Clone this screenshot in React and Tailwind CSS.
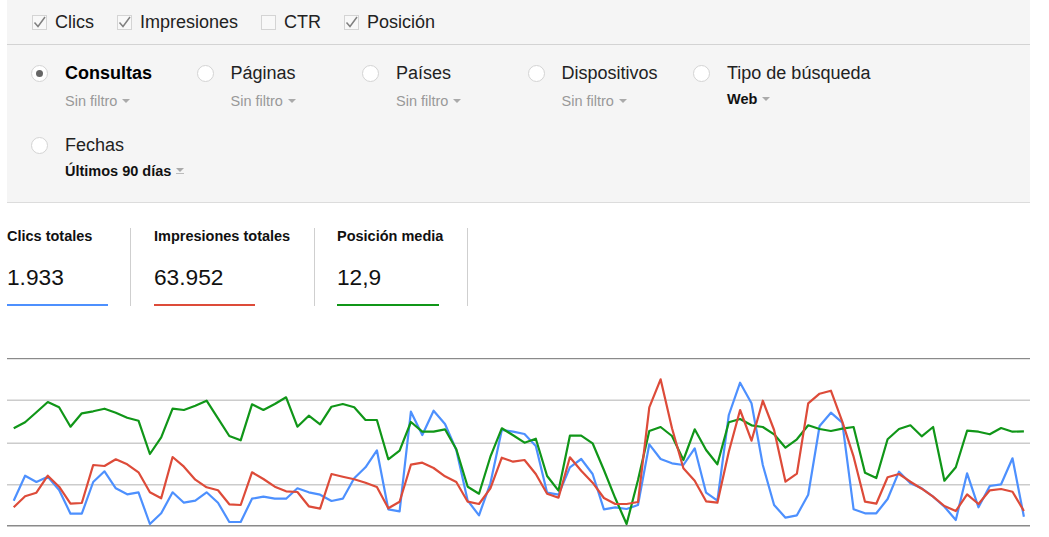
import React from "react";

const FONT = "font-['Liberation_Sans',Arial,sans-serif]";

const green = [235,217,187,156,172,230,190,184,176,188,203,212,312,262,176,180,167,152,205,258,271,163,180,162,142,230,197,223,170,162,172,210,210,328,302,216,245,245,238,298,410,431,320,235,256,278,266,378,422,257,257,280,360,445,522,390,243,231,258,330,238,300,343,217,207,226,231,253,293,268,226,237,243,236,231,368,384,268,237,226,259,231,392,352,242,245,253,234,245,244];
const red = [472,439,428,377,410,461,459,345,348,328,343,367,427,445,321,350,389,412,421,463,465,367,387,410,424,426,469,476,372,380,388,398,411,475,455,344,338,354,379,396,455,462,415,323,335,330,372,431,443,322,362,398,444,462,462,456,172,88,235,355,392,454,458,305,180,272,152,240,395,371,160,131,122,215,320,455,461,382,372,395,416,440,468,483,433,462,421,417,425,483];
const blue = [452,377,396,380,420,491,491,396,364,415,433,427,522,490,427,458,452,427,458,516,516,446,440,446,446,415,427,434,453,446,385,352,301,478,484,185,255,182,222,300,452,496,400,240,245,252,288,428,434,352,327,372,478,472,477,465,283,327,340,345,295,428,452,195,98,160,345,465,503,496,434,228,188,218,478,490,490,447,365,400,415,440,470,510,370,472,408,403,325,500];

// values were read off a 3x crop, so scale back to chart coordinates
const toPoints = (vals) =>
  vals.map((v, i) => `${(6.7 + i * 11.35).toFixed(1)},${(v / 3).toFixed(1)}`).join(" ");

function Check({ label, checked }) {
  return (
    <label className="flex items-center gap-2">
      <span className="w-[15px] h-[15px] border border-[#d4d4d4] bg-[#f8f8f8] flex items-center justify-center shrink-0">
        {checked && (
          <svg className="overflow-visible" width="13" height="13" viewBox="0 0 13 13" fill="none">
            <path d="M1.5 6.5L5 10.5L12 1" stroke="#808080" strokeWidth="1.5" />
          </svg>
        )}
      </span>
      <span>{label}</span>
    </label>
  );
}

function Filter({ label, sub, active, strong, flag }) {
  return (
    <div className="w-[165.5px] flex h-[72px]">
      <div className="w-[34px] pt-[1px] shrink-0">
        <span className="w-[17px] h-[17px] rounded-full border border-[#d4d4d4] bg-white flex items-center justify-center">
          {active && <span className="w-[7px] h-[7px] rounded-full bg-[#666]" />}
        </span>
      </div>
      <div>
        <div className={`text-[18px] leading-[18px] whitespace-nowrap ${active ? "font-bold text-black" : "text-[#222]"}`}>
          {label}
        </div>
        <div className={`flex items-center gap-[5px] whitespace-nowrap leading-[16px] text-[14.5px] ${strong ? "mt-[9px] font-bold text-[#111]" : "mt-[11px] text-[#999]"}`}>
          {sub}
          <span className="flex flex-col items-center">
            <span className="w-0 h-0 border-x-[4px] border-x-transparent border-t-[4px] border-t-[#aaa]" />
            {flag && <span className="w-[8px] h-[1px] bg-[#bbb] mt-[1px]" />}
          </span>
        </div>
      </div>
    </div>
  );
}

function Stat({ title, value, color, className }) {
  return (
    <div className={`h-[78px] flex flex-col ${className}`}>
      <div className="text-[14.5px] font-bold text-[#111] leading-[16px] whitespace-nowrap">{title}</div>
      <div className="text-[22.7px] leading-[26px] text-[#111] mt-[20px]">{value}</div>
      <div className={`mt-auto h-[2px] ${color}`} />
    </div>
  );
}

export default function App() {
  return (
    <div className={`w-[1049px] h-[537px] bg-white overflow-hidden ${FONT}`}>
      {/* Filter panel */}
      <div className="ml-[7px] w-[1023px] h-[203px] bg-[#f5f5f5] border-b border-[#dcdcdc]">
        <div className="h-[45px] border-b border-[#d3d3d3] pl-[25px] flex items-center gap-[23px] text-[18px] text-[#222]">
          <Check label="Clics" checked />
          <Check label="Impresiones" checked />
          <Check label="CTR" />
          <Check label="Posición" checked />
        </div>
        <div className="pl-[24px] pt-[19px] w-[860px] flex flex-wrap">
          <Filter label="Consultas" sub="Sin filtro" active />
          <Filter label="Páginas" sub="Sin filtro" />
          <Filter label="Países" sub="Sin filtro" />
          <Filter label="Dispositivos" sub="Sin filtro" />
          <Filter label="Tipo de búsqueda" sub="Web" strong />
          <Filter label="Fechas" sub="Últimos 90 días" strong flag />
        </div>
      </div>

      {/* Totals */}
      <div className="ml-[7px] mt-[25px] flex">
        <Stat className="w-[101px]" title="Clics totales" value="1.933" color="bg-[#4d90fe]" />
        <div className="ml-[22px] w-px h-[78px] bg-[#cfcfcf]" />
        <Stat className="ml-[23px] w-[101px]" title="Impresiones totales" value="63.952" color="bg-[#dd4b39]" />
        <div className="ml-[59px] w-px h-[78px] bg-[#cfcfcf]" />
        <Stat className="ml-[22px] w-[102px]" title="Posición media" value="12,9" color="bg-[#109618]" />
        <div className="ml-[28px] w-px h-[78px] bg-[#cfcfcf]" />
      </div>

      {/* Chart */}
      <svg className="block ml-[7px] mt-[44px]" width="1023" height="187" viewBox="0 0 1023 187">
        <rect x="0" y="8" width="1023" height="1" fill="#8a8a8a" />
        <rect x="0" y="9" width="1023" height="1" fill="#e6e6e6" />
        <rect x="0" y="49.5" width="1023" height="1.5" fill="#cccccc" />
        <rect x="0" y="92.5" width="1023" height="1.5" fill="#cccccc" />
        <rect x="0" y="134" width="1023" height="1.5" fill="#cccccc" />
        <rect x="0" y="175" width="1023" height="1.5" fill="#8a8a8a" />
        <polyline points={toPoints(blue)} fill="none" stroke="#4d90fe" strokeWidth="2.2" strokeLinejoin="round" />
        <polyline points={toPoints(green)} fill="none" stroke="#109618" strokeWidth="2.2" strokeLinejoin="round" />
        <polyline points={toPoints(red)} fill="none" stroke="#dd4b39" strokeWidth="2.2" strokeLinejoin="round" />
      </svg>
    </div>
  );
}
